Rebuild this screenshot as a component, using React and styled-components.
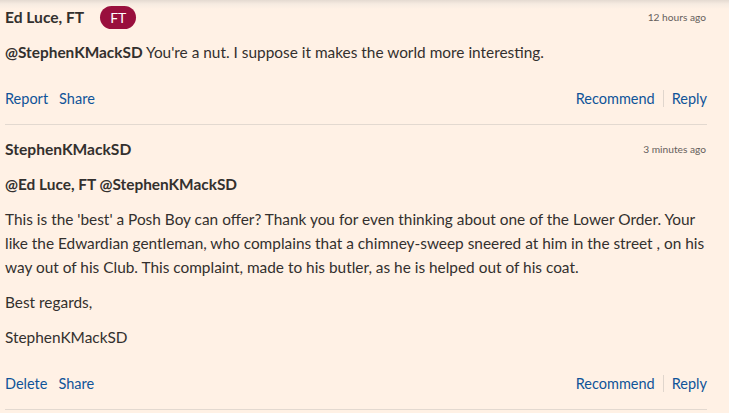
import styled, { createGlobalStyle } from 'styled-components';

const GlobalStyle = createGlobalStyle`
  html, body {
    margin: 0;
    padding: 0;
    background: #fff1e5;
  }
  body {
    font-family: Lato, "Liberation Sans", sans-serif;
    color: #33302e;
  }
`;

const Page = styled.div`
  min-height: 413px;
  padding: 0 22px 0 5px;
  background: linear-gradient(to bottom, #e4dad1 0px, #f6ebe1 4px, #fff1e5 9px);
`;

const Comment = styled.article`
  padding: ${p => (p.$first ? '5px' : '12px')} 0 14px;
  border-bottom: 1px solid #e3d9d0;
`;

const Header = styled.header`
  display: flex;
  align-items: center;
  height: 24px;
`;

const Name = styled.span`
  font-size: 15.6px;
  font-weight: 700;
`;

const Badge = styled.span`
  display: inline-flex;
  align-items: center;
  justify-content: center;
  width: 36px;
  height: 23px;
  margin-left: 16px;
  border-radius: 12px;
  background: #990f3d;
  color: #fff;
  font-size: 14px;
`;

const Time = styled.time`
  margin-left: auto;
  padding-right: 1px;
  font-size: 10.2px;
  color: #66605c;
`;

const Body = styled.div`
  display: flex;
  flex-direction: column;
  gap: 11px;
  margin-top: 11px;
  font-size: 15.4px;
  line-height: 24px;
`;

const Para = styled.p`
  margin: 0;
  font-weight: ${p => (p.$bold ? 700 : 400)};
`;

const Mention = styled.b`
  font-weight: 700;
`;

const Actions = styled.div`
  display: flex;
  align-items: center;
  margin-top: 22px;
  height: 24px;
  font-size: 14.5px;
`;

const Group = styled.div`
  display: flex;
  align-items: center;
  gap: ${p => p.$gap || 11}px;
  margin-left: ${p => (p.$right ? 'auto' : '0')};
`;

const Link = styled.a`
  color: #0f5499;
  text-decoration: none;
  cursor: pointer;
`;

const Divider = styled.span`
  width: 1px;
  height: 17px;
  background: #e0d6cd;
`;

const CommentActions = ({ left }) => (
  <Actions>
    <Group>
      <Link>{left}</Link>
      <Link>Share</Link>
    </Group>
    <Group $right $gap={8}>
      <Link>Recommend</Link>
      <Divider />
      <Link>Reply</Link>
    </Group>
  </Actions>
);

const App = () => {
  return (
    <>
      <GlobalStyle />
      <Page>
        <Comment $first>
          <Header>
            <Name>Ed Luce, FT</Name>
            <Badge>FT</Badge>
            <Time>12 hours ago</Time>
          </Header>
          <Body>
            <Para>
              <Mention>@StephenKMackSD</Mention> You're a nut. I suppose it makes the world more interesting.
            </Para>
          </Body>
          <CommentActions left="Report" />
        </Comment>

        <Comment>
          <Header>
            <Name>StephenKMackSD</Name>
            <Time>3 minutes ago</Time>
          </Header>
          <Body>
            <Para $bold>@Ed Luce, FT @StephenKMackSD</Para>
            <Para>
              This is the 'best' a Posh Boy can offer? Thank you for even thinking about one of the Lower Order. Your like the Edwardian gentleman, who complains that a chimney-sweep sneered at him in the street , on his way out of his Club. This complaint, made to his butler, as he is helped out of his coat.
            </Para>
            <Para>Best regards,</Para>
            <Para>StephenKMackSD</Para>
          </Body>
          <CommentActions left="Delete" />
        </Comment>
      </Page>
    </>
  );
};

export default App;
